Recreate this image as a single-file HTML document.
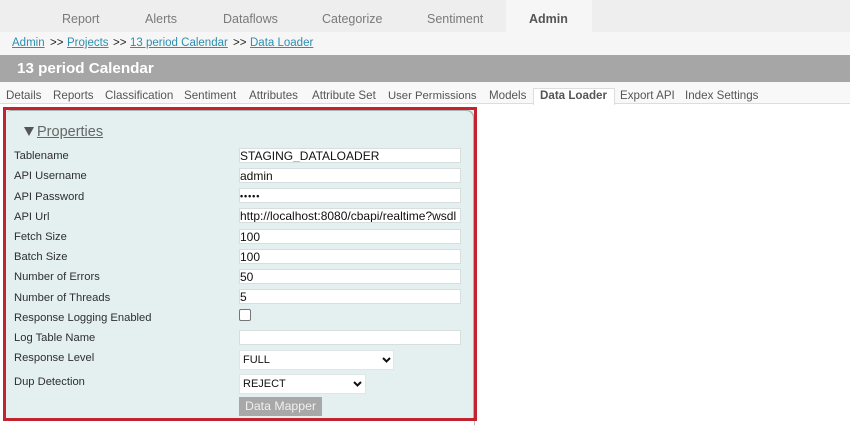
<!DOCTYPE html>
<html><head><meta charset="utf-8">
<style>
html,body{margin:0;padding:0;width:850px;height:425px;overflow:hidden;background:#fff;font-family:"Liberation Sans",sans-serif}
#w{left:0;top:0;width:850px;height:425px;overflow:hidden;filter:blur(.3px)}
div,span,a{position:absolute;white-space:nowrap}
.n{top:11px;font-size:12.5px;line-height:16px;color:#7a7a7a}
.b{top:36px;font-size:11.5px;line-height:14px;color:#222}
a{color:#2b8fb0;text-decoration:underline}
.t{top:89px;font-size:11.6px;line-height:14px;color:#555}
.l{left:14px;font-size:11.2px;line-height:14px;color:#2e2e2e}
.i{left:239px;width:220px;height:13px;background:#fff;border:1px solid #d8dede;font-size:12px;line-height:14px;color:#111;overflow:hidden}
.i span{left:0;top:0}
.s{left:239px;background:#fff;border:1px solid #e0e6e6;height:18px;font-size:11px;line-height:19px;color:#111}
.s span{left:3px;top:0}
.s svg{position:absolute;top:6px}
</style></head><body>
<div id="w">
<div style="left:0;top:0;width:850px;height:32px;background:#eeeeee"></div>
<div style="left:506px;top:0;width:86px;height:32px;background:#f6f6f6"></div>
<div class="n" style="left:62px">Report</div>
<div class="n" style="left:145px">Alerts</div>
<div class="n" style="left:223px">Dataflows</div>
<div class="n" style="left:322px">Categorize</div>
<div class="n" style="left:427px">Sentiment</div>
<div class="n" style="left:529px;color:#555;font-weight:bold;top:11px">Admin</div>

<div style="left:0;top:32px;width:850px;height:23px;background:#f6f6f6"></div>
<a class="b" style="left:12px;color:#2b8fb0">Admin</a>
<div class="b" style="left:50px">&gt;&gt;</div>
<a class="b" style="left:67px;color:#2b8fb0">Projects</a>
<div class="b" style="left:113px">&gt;&gt;</div>
<a class="b" style="left:130px;color:#2b8fb0">13 period Calendar</a>
<div class="b" style="left:233px">&gt;&gt;</div>
<a class="b" style="left:250px;color:#2b8fb0">Data Loader</a>

<div style="left:0;top:55px;width:850px;height:27px;background:#a6a6a6"></div>
<div style="left:17px;top:60px;font-size:15.200px;line-height:18px;font-weight:bold;color:#fff">13 period Calendar</div>

<div style="left:0;top:82px;width:850px;height:21px;background:#f8f8f8;border-bottom:1px solid #ddd"></div>
<div class="t" style="left:6px">Details</div>
<div class="t" style="left:53px">Reports</div>
<div class="t" style="left:105px">Classification</div>
<div class="t" style="left:184px">Sentiment</div>
<div class="t" style="left:249px">Attributes</div>
<div class="t" style="left:312px">Attribute Set</div>
<div class="t" style="left:388px;font-size:11.300px">User Permissions</div>
<div class="t" style="left:489px">Models</div>
<div style="left:533px;top:88px;width:80px;height:16px;background:#fff;border:1px solid #ddd;border-bottom:0"></div>
<div class="t" style="left:540px;font-weight:bold;color:#555">Data Loader</div>
<div class="t" style="left:620px">Export API</div>
<div class="t" style="left:685px">Index Settings</div>

<div style="left:3px;top:107px;width:468px;height:308px;background:#e4f0f0;border:3px solid #c1232f"></div>
<div style="left:6px;top:110px;width:468px;height:308px;border-radius:5px 7px 0 0;box-shadow:inset -1px 1px 0 #a9b3b3"></div>
<div style="left:474px;top:421px;width:1px;height:4px;background:#bbb"></div>

<svg style="position:absolute;left:24px;top:127px" width="10" height="9"><path d="M0 0H10L5 9Z" fill="#555"/></svg>
<div style="left:37px;top:124px;font-size:14.500px;line-height:17px;color:#666;text-decoration:underline">Properties</div>

<div class="l" style="top:149px">Tablename</div>
<div class="l" style="top:169px">API Username</div>
<div class="l" style="top:190px">API Password</div>
<div class="l" style="top:210px">API Url</div>
<div class="l" style="top:230px">Fetch Size</div>
<div class="l" style="top:250px">Batch Size</div>
<div class="l" style="top:270px">Number of Errors</div>
<div class="l" style="top:291px">Number of Threads</div>
<div class="l" style="top:311px">Response Logging Enabled</div>
<div class="l" style="top:331px">Log Table Name</div>
<div class="l" style="top:351px">Response Level</div>
<div class="l" style="top:375px">Dup Detection</div>

<div class="i" style="top:148px"><span>STAGING_DATALOADER</span></div>
<div class="i" style="top:168px"><span>admin</span></div>
<div class="i" style="top:188px"><span style="font-size:9px;font-weight:bold;letter-spacing:.9px">•••••</span></div>
<div class="i" style="top:208px"><span>http://localhost:8080/cbapi/realtime?wsdl</span></div>
<div class="i" style="top:229px"><span>100</span></div>
<div class="i" style="top:249px"><span>100</span></div>
<div class="i" style="top:269px"><span>50</span></div>
<div class="i" style="top:289px"><span>5</span></div>
<div style="left:239px;top:309px;width:10px;height:10px;background:#fff;border:1px solid #767676;border-radius:2px"></div>
<div class="i" style="top:330px"></div>

<div class="s" style="top:350px;width:153px"><span>FULL</span><svg style="left:142px" width="9" height="6"><path d="M1 1L4.500 4.500L8 1" fill="none" stroke="#111" stroke-width="2"/></svg></div>
<div class="s" style="top:374px;width:125px"><span>REJECT</span><svg style="left:113px" width="9" height="6"><path d="M1 1L4.500 4.500L8 1" fill="none" stroke="#111" stroke-width="2"/></svg></div>
<div style="left:239px;top:397px;width:83px;height:19px;background:#a8a8a8;color:#f0f0f0;font-size:12.300px;line-height:18px;text-align:center">Data Mapper</div>
</div>
</body></html>
